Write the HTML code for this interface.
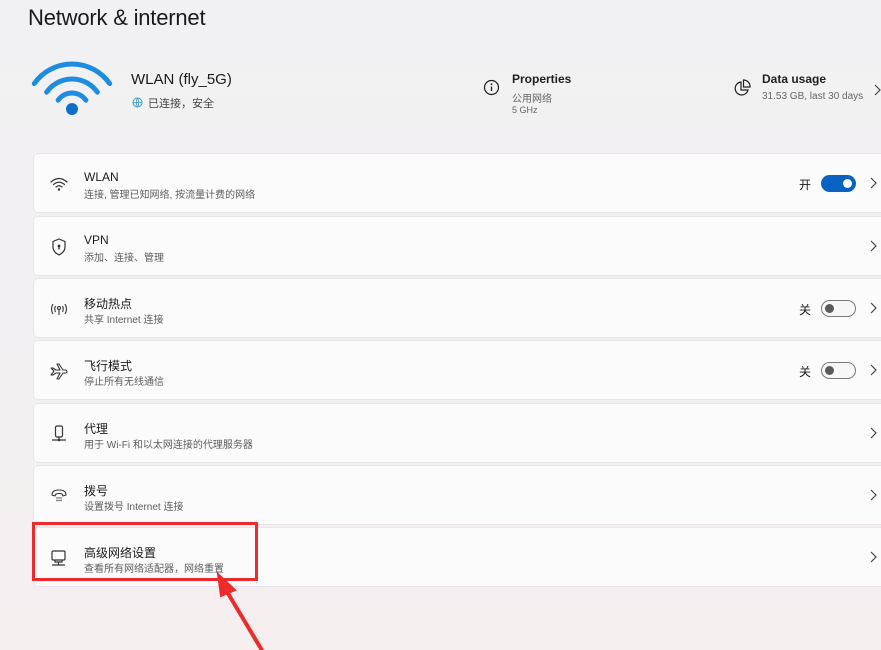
<!DOCTYPE html>
<html><head><meta charset="utf-8">
<style>
*{margin:0;padding:0;box-sizing:border-box}
body{width:881px;height:650px;overflow:hidden;background:linear-gradient(#f1f1f3,#f3f0f1 70%,#f4eeef);font-family:"Liberation Sans","Noto Sans CJK SC",sans-serif;color:#1b1b1b;position:relative}
.abs{position:absolute}
h1{position:absolute;left:28px;top:5px;font-size:22px;font-weight:normal;color:#1a1a1a;letter-spacing:-0.2px}
.card{position:absolute;left:33px;width:860px;height:60px;background:#fbfbfb;border:1px solid #e7e5e7;border-radius:5px}
.ic{position:absolute;left:14px;top:19px;width:22px;height:22px}
.t1{position:absolute;left:50px;top:16px;font-size:12px;color:#1b1b1b}
.t2{position:absolute;left:50px;top:32px;font-size:10px;color:#5d5d5d}
.chev{position:absolute;left:832px;top:22px;width:14px;height:14px}
.tog{position:absolute;left:787px;top:21px;width:35px;height:17px;border-radius:9px}
.on{background:#0a62c2}
.on::after{content:"";position:absolute;right:4px;top:4px;width:9px;height:9px;border-radius:50%;background:#fff}
.off{border:1px solid #7a7a7a;background:#f7f7f7}
.off::after{content:"";position:absolute;left:3px;top:3px;width:9px;height:9px;border-radius:50%;background:#5a5a5a}
.lab{position:absolute;left:765px;top:22px;font-size:12px}
svg{overflow:visible}
</style></head><body>
<h1>Network &amp; internet</h1>

<svg class="abs" style="left:0;top:0" width="150" height="130" viewBox="0 0 150 130">
<g fill="none" stroke="#1e8de0" stroke-width="5" stroke-linecap="round">
<path d="M34.3 83.6A46 46 0 0 1 109.7 83.6"/>
<path d="M46.6 92.2A31 31 0 0 1 97.4 92.2"/>
<path d="M58.1 100.2A17 17 0 0 1 85.9 100.2"/>
</g><circle cx="72" cy="109" r="6" fill="#0f6fc8"/></svg>
<div class="abs" style="left:131px;top:71px;font-size:15px;color:#1a1a1a">WLAN (fly_5G)</div>
<svg class="abs" style="left:132px;top:97px" width="11" height="11" viewBox="0 0 11 11"><circle cx="5.5" cy="5.5" r="4.5" fill="none" stroke="#3a9bd6" stroke-width="1"/><path d="M1 5.5H10M5.5 1Q3 5.5 5.5 10M5.5 1Q8 5.5 5.5 10" fill="none" stroke="#3a9bd6" stroke-width=".8"/></svg>
<div class="abs" style="left:148px;top:95px;font-size:11px;color:#444">已连接，安全</div>

<svg class="abs" style="left:483px;top:79px" width="17" height="17" viewBox="0 0 17 17"><circle cx="8.5" cy="8.5" r="7" fill="none" stroke="#222" stroke-width="1.2"/><path d="M8.5 7.5V12" stroke="#222" stroke-width="1.3"/><circle cx="8.5" cy="5.2" r=".9" fill="#222"/></svg>
<div class="abs" style="left:512px;top:72px;font-size:12px;font-weight:bold;color:#222">Properties</div>
<div class="abs" style="left:512px;top:90px;font-size:10px;color:#666">公用网络</div>
<div class="abs" style="left:512px;top:105px;font-size:9px;color:#666">5 GHz</div>
<svg class="abs" style="left:734px;top:79px" width="18" height="18" viewBox="0 0 18 18"><path d="M7 3A6.5 6.5 0 1 0 14 11H7Z" fill="none" stroke="#222" stroke-width="1.2"/><path d="M9.5 1A6.5 6.5 0 0 1 16 8H9.5Z" fill="none" stroke="#222" stroke-width="1.2"/></svg>
<div class="abs" style="left:762px;top:72px;font-size:12px;font-weight:bold;color:#222">Data usage</div>
<div class="abs" style="left:762px;top:91px;font-size:10px;color:#666">31.53 GB, last 30 days</div>
<svg class="abs" style="left:874px;top:84px" width="8" height="12" viewBox="0 0 8 12"><path d="M1 1L6 6L1 11" fill="none" stroke="#444" stroke-width="1.2"/></svg>

<div class="card" style="top:153px">
<svg class="ic" viewBox="0 0 22 22"><g fill="none" stroke="#333" stroke-width="1.2" stroke-linecap="round"><path d="M3 9Q11 2 19 9"/><path d="M5.5 11.5Q11 7 16.5 11.5"/><path d="M8 14Q11 11.5 14 14"/></g><circle cx="11" cy="16.5" r="1.2" fill="#333"/></svg>
<div class="t1">WLAN</div><div class="t2">连接, 管理已知网络, 按流量计费的网络</div>
<div class="lab">开</div><div class="tog on"></div>
<svg class="chev" viewBox="0 0 14 14"><path d="M5 2L10 7L5 12" fill="none" stroke="#444" stroke-width="1.2"/></svg></div>

<div class="card" style="top:216px">
<svg class="ic" viewBox="0 0 22 22"><path d="M11 3L17 5.5V11Q17 16 11 19Q5 16 5 11V5.5Z" fill="none" stroke="#333" stroke-width="1.2"/><circle cx="11" cy="10" r="1.4" fill="#333"/><path d="M11 10V13.5" stroke="#333" stroke-width="1.3"/></svg>
<div class="t1">VPN</div><div class="t2">添加、连接、管理</div>
<svg class="chev" viewBox="0 0 14 14"><path d="M5 2L10 7L5 12" fill="none" stroke="#444" stroke-width="1.2"/></svg></div>

<div class="card" style="top:278px">
<svg class="ic" viewBox="0 0 22 22"><g fill="none" stroke="#333" stroke-width="1.1"><path d="M5 6Q2 11 5 16M17 6Q20 11 17 16M7.5 8Q6 11 7.5 14M14.5 8Q16 11 14.5 14"/><circle cx="11" cy="10" r="1.5"/><path d="M11 11.5V17"/></g></svg>
<div class="t1">移动热点</div><div class="t2">共享 Internet 连接</div>
<div class="lab">关</div><div class="tog off"></div>
<svg class="chev" viewBox="0 0 14 14"><path d="M5 2L10 7L5 12" fill="none" stroke="#444" stroke-width="1.2"/></svg></div>

<div class="card" style="top:340px">
<svg class="ic" viewBox="0 0 22 22"><path d="M3 8L6 11L3 15H5L8 13H12L9 19H11L15 13H18Q20 12 18 10H15L11 4H9L12 10H8L5 8Z" fill="none" stroke="#333" stroke-width="1.1" stroke-linejoin="round"/></svg>
<div class="t1">飞行模式</div><div class="t2">停止所有无线通信</div>
<div class="lab">关</div><div class="tog off"></div>
<svg class="chev" viewBox="0 0 14 14"><path d="M5 2L10 7L5 12" fill="none" stroke="#444" stroke-width="1.2"/></svg></div>

<div class="card" style="top:403px">
<svg class="ic" viewBox="0 0 22 22"><g fill="none" stroke="#333" stroke-width="1.2"><rect x="7.5" y="3" width="7" height="11" rx="1.5"/><path d="M11 14V17M4 17H18"/></g><circle cx="11" cy="17" r="1.3" fill="#333"/></svg>
<div class="t1">代理</div><div class="t2">用于 Wi-Fi 和以太网连接的代理服务器</div>
<svg class="chev" viewBox="0 0 14 14"><path d="M5 2L10 7L5 12" fill="none" stroke="#444" stroke-width="1.2"/></svg></div>

<div class="card" style="top:465px">
<svg class="ic" viewBox="0 0 22 22"><path d="M4 10Q4 5 11 5Q18 5 18 10L15 11L14 9Q11 8 8 9L7 11Z" fill="none" stroke="#333" stroke-width="1.1"/><g fill="#333"><circle cx="9" cy="13" r=".7"/><circle cx="11" cy="13" r=".7"/><circle cx="13" cy="13" r=".7"/><circle cx="9" cy="15.5" r=".7"/><circle cx="11" cy="15.5" r=".7"/><circle cx="13" cy="15.5" r=".7"/></g></svg>
<div class="t1">拨号</div><div class="t2">设置拨号 Internet 连接</div>
<svg class="chev" viewBox="0 0 14 14"><path d="M5 2L10 7L5 12" fill="none" stroke="#444" stroke-width="1.2"/></svg></div>

<div class="card" style="top:527px">
<svg class="ic" viewBox="0 0 22 22"><g fill="none" stroke="#333" stroke-width="1.2"><rect x="4" y="4" width="13" height="9" rx="1.2"/><path d="M7 13V15H14V13M10.5 15V18M4 18H17"/></g></svg>
<div class="t1">高级网络设置</div><div class="t2">查看所有网络适配器，网络重置</div>
<svg class="chev" viewBox="0 0 14 14"><path d="M5 2L10 7L5 12" fill="none" stroke="#444" stroke-width="1.2"/></svg></div>

<div class="abs" style="left:32px;top:522px;width:226px;height:59px;border:3px solid #ee2b2b"></div>
<svg class="abs" style="left:0;top:0" width="881" height="650"><path d="M263 652L226 590" stroke="#ee2b2b" stroke-width="4"/><path d="M218 574L235 590L221 596Z" fill="#ee2b2b" stroke="#ee2b2b" stroke-width="2"/></svg>
</body></html>
